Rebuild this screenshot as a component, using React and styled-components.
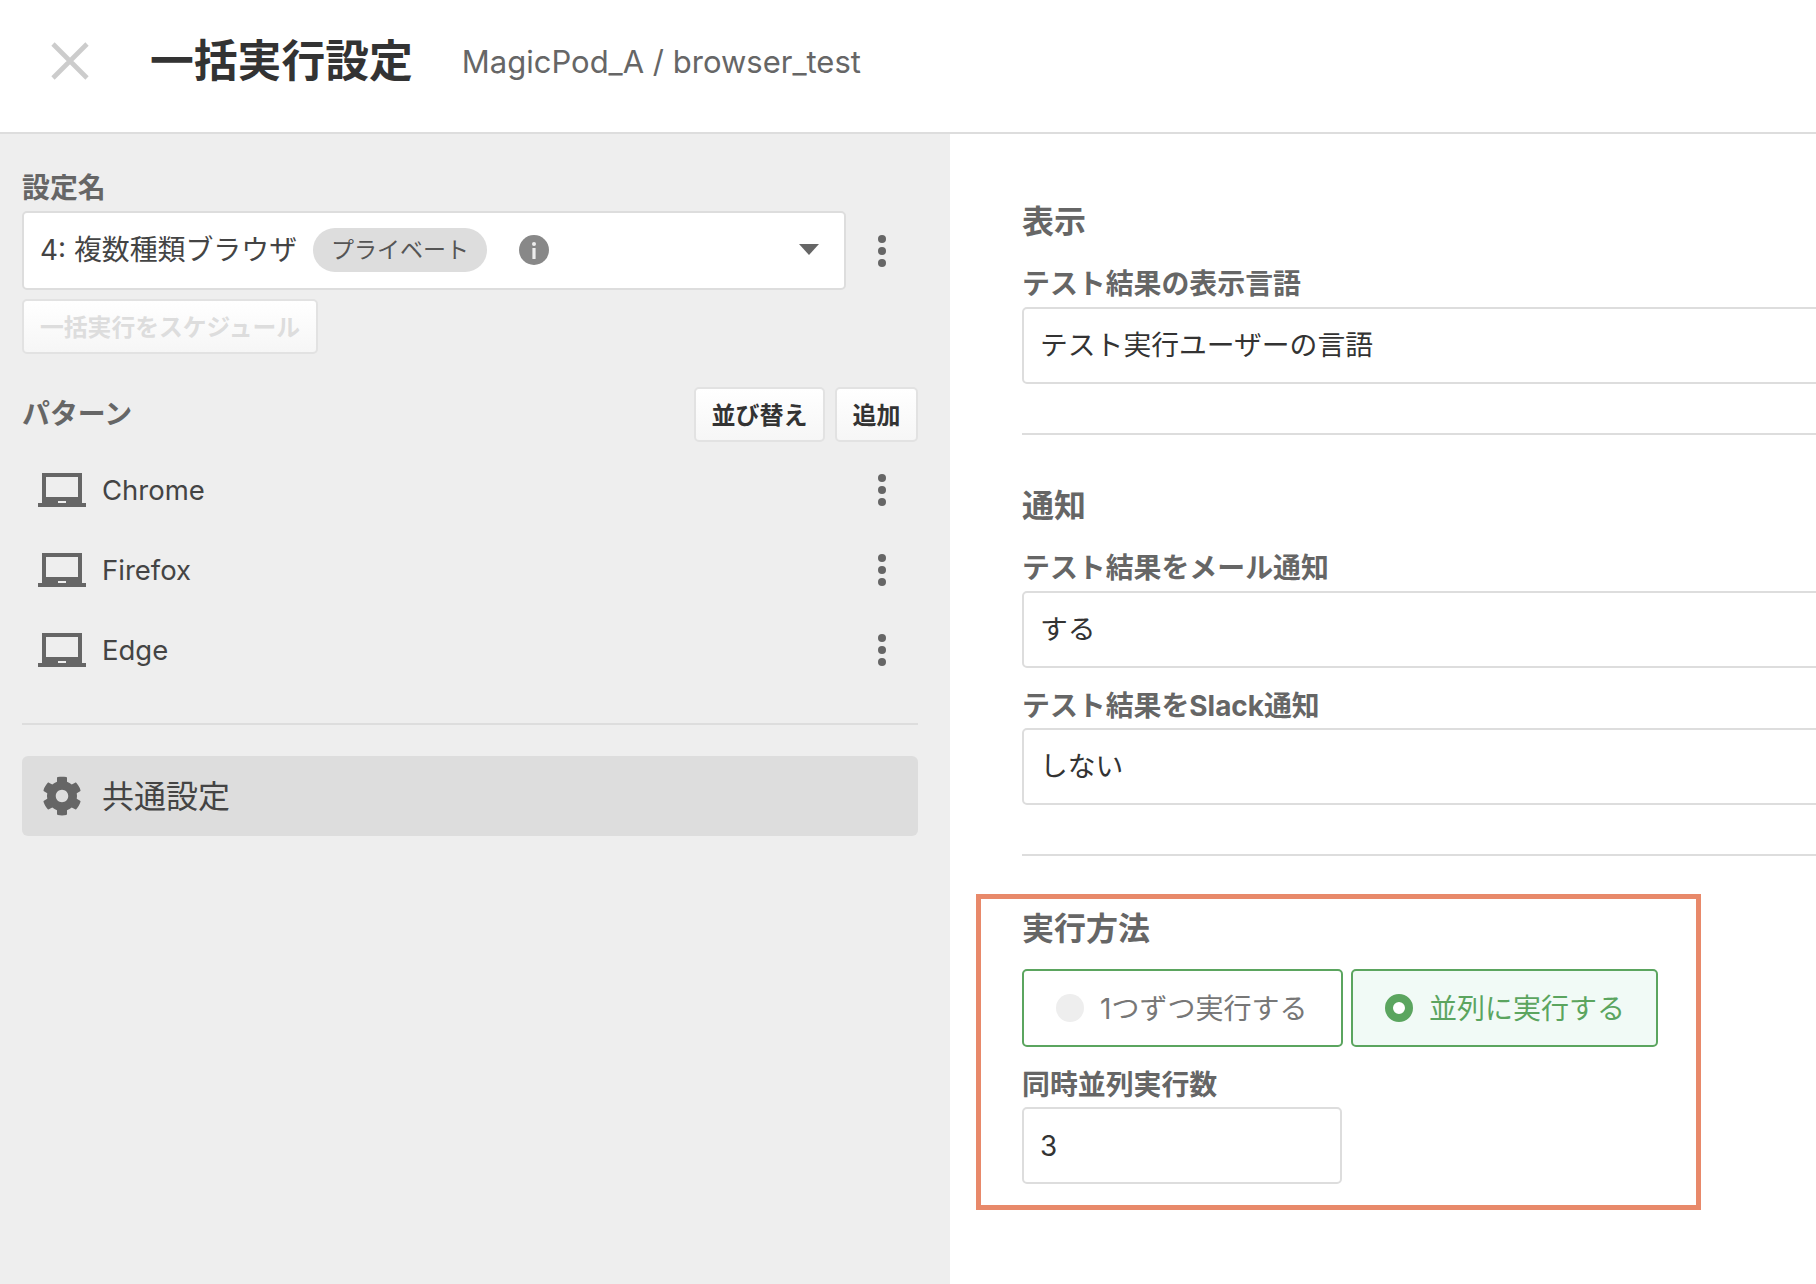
import React from 'react';
import styled, { createGlobalStyle } from 'styled-components';
import { FaCog } from 'react-icons/fa';

const GlobalStyle = createGlobalStyle`
  * {
    box-sizing: border-box;
  }

  html,
  body {
    margin: 0;
    height: 100%;
    overflow: hidden;
    background: #fff;
    font-family: Inter, "Noto Sans CJK JP", sans-serif;
    color: #444;
  }
`;

function LaptopIcon() {
  return (
    <svg width="48" height="34" viewBox="0 0 48 34">
      <path fill="#666" fillRule="evenodd" d="M4 0h40v30h4v4H0v-4h4zM8 4v20h32V4z" />
      <rect x="20" y="28" width="8" height="2" fill="#eee" />
    </svg>
  );
}

function InfoIcon() {
  return (
    <svg width="30" height="30" viewBox="0 0 30 30">
      <circle cx="15" cy="15" r="15" fill="#888" />
      <circle cx="15" cy="9" r="2" fill="#eee" />
      <rect x="13.4" y="13" width="3.2" height="11" rx="0.5" fill="#eee" />
    </svg>
  );
}

function CloseIcon() {
  return (
    <svg width="38" height="38" viewBox="0 0 38 38">
      <path d="M2 2l34 34M36 2L2 36" stroke="#ccc" strokeWidth="4.6" fill="none" />
    </svg>
  );
}

const patterns = ['Chrome', 'Firefox', 'Edge'];

function App() {
  return (
    <>
      <GlobalStyle />
      <Page>
        <Header>
          <CloseButton>
            <CloseIcon />
          </CloseButton>
          <Title>一括実行設定</Title>
          <Breadcrumb>MagicPod_A / browser_test</Breadcrumb>
        </Header>
        <Body>
          <Sidebar>
            <SidebarLabel>設定名</SidebarLabel>
            <SelectRow>
              <SelectBox>
                <SelectName>4: 複数種類ブラウザ</SelectName>
                <Chip>プライベート</Chip>
                <InfoWrap>
                  <InfoIcon />
                </InfoWrap>
                <Caret />
              </SelectBox>
              <Kebab>
                <i />
                <i />
                <i />
              </Kebab>
            </SelectRow>
            <ScheduleButton>一括実行をスケジュール</ScheduleButton>
            <PatternHead>
              <PatternTitle>パターン</PatternTitle>
              <SmallButton>並び替え</SmallButton>
              <SmallButton>追加</SmallButton>
            </PatternHead>
            <PatternList>
              {patterns.map((name) => (
                <PatternRow key={name}>
                  <LaptopIcon />
                  <PatternName>{name}</PatternName>
                  <Kebab>
                    <i />
                    <i />
                    <i />
                  </Kebab>
                </PatternRow>
              ))}
            </PatternList>
            <SideDivider />
            <CommonItem>
              <FaCog />
              <span>共通設定</span>
            </CommonItem>
          </Sidebar>
          <Content>
            <SectionTitle>表示</SectionTitle>
            <FieldLabel>テスト結果の表示言語</FieldLabel>
            <Field>テスト実行ユーザーの言語</Field>
            <Divider />
            <SectionTitle>通知</SectionTitle>
            <FieldLabel>テスト結果をメール通知</FieldLabel>
            <Field>する</Field>
            <FieldLabel $tight>テスト結果をSlack通知</FieldLabel>
            <Field>しない</Field>
            <Divider />
            <Highlight>
              <SectionTitle>実行方法</SectionTitle>
              <RadioGroup>
                <RadioCard>
                  <RadioDot />
                  <span>1つずつ実行する</span>
                </RadioCard>
                <RadioCard $active>
                  <RadioDot $active />
                  <span>並列に実行する</span>
                </RadioCard>
              </RadioGroup>
              <FieldLabel $tight>同時並列実行数</FieldLabel>
              <Field $short>3</Field>
            </Highlight>
          </Content>
        </Body>
      </Page>
    </>
  );
}

const Page = styled.div`
  display: flex;
  flex-direction: column;
  width: 1816px;
  height: 1284px;
  overflow: hidden;
`;

const Header = styled.header`
  display: flex;
  align-items: center;
  flex: 0 0 134px;
  padding: 0 0 10px 51px;
  border-bottom: 2px solid #ddd;
`;

const CloseButton = styled.div`
  display: flex;
  width: 38px;
  height: 38px;
  margin-right: 61px;
`;

const Title = styled.h1`
  margin: 2px 49px 0 0;
  font-size: 43.8px;
  line-height: 60px;
  font-weight: 700;
  color: #333;
`;

const Breadcrumb = styled.span`
  margin-top: 2px;
  font-size: 31px;
  line-height: 40px;
  color: #666;
`;

const Body = styled.div`
  display: flex;
  flex: 1;
  min-height: 0;
`;

const Sidebar = styled.aside`
  flex: 0 0 950px;
  padding: 31px 32px 0 22px;
  background: #eee;
`;

const SidebarLabel = styled.div`
  font-size: 27.9px;
  line-height: 46px;
  font-weight: 700;
  color: #666;
`;

const SelectRow = styled.div`
  display: flex;
  align-items: center;
  justify-content: space-between;
  padding-right: 32px;
`;

const SelectBox = styled.div`
  display: flex;
  align-items: center;
  width: 824px;
  height: 79px;
  padding: 0 25px 2px 16px;
  background: #fff;
  border: 2px solid #ddd;
  border-radius: 5px;
`;

const SelectName = styled.span`
  font-size: 27.9px;
  line-height: 40px;
  color: #444;
  white-space: nowrap;
`;

const Chip = styled.span`
  margin-left: 16px;
  padding: 0 18px;
  height: 44px;
  border-radius: 22px;
  background: #ddd;
  font-size: 23px;
  line-height: 44px;
  color: #555;
  white-space: nowrap;
`;

const InfoWrap = styled.span`
  display: flex;
  margin-left: 32px;
`;

const Caret = styled.span`
  margin-left: auto;
  width: 0;
  height: 0;
  border-left: 10px solid transparent;
  border-right: 10px solid transparent;
  border-top: 11px solid #666;
`;

const Kebab = styled.span`
  display: flex;
  flex-direction: column;
  gap: 4px;
  width: 8px;

  i {
    display: block;
    width: 8px;
    height: 8px;
    border-radius: 50%;
    background: #666;
  }
`;

const ScheduleButton = styled.div`
  display: inline-flex;
  align-items: center;
  height: 55px;
  margin-top: 9px;
  padding: 0 16px 3px;
  background: linear-gradient(#fff, #f6f6f6);
  border: 2px solid #e2e2e2;
  border-radius: 5px;
  font-size: 23.8px;
  font-weight: 700;
  color: #ddd;
`;

const PatternHead = styled.div`
  display: flex;
  align-items: center;
  gap: 10px;
  margin-top: 33px;
`;

const PatternTitle = styled.div`
  margin-right: auto;
  font-size: 27.9px;
  line-height: 39px;
  font-weight: 700;
  color: #666;
`;

const SmallButton = styled.div`
  display: flex;
  align-items: center;
  height: 55px;
  padding: 0 15.5px 3px;
  background: linear-gradient(#fff, #f6f6f6);
  border: 2px solid #e2e2e2;
  border-radius: 5px;
  font-size: 24px;
  font-weight: 700;
  color: #333;
`;

const PatternList = styled.div`
  display: flex;
  flex-direction: column;
  padding-top: 8px;
`;

const PatternRow = styled.div`
  display: flex;
  align-items: center;
  height: 80px;
  padding: 0 32px 0 16px;
`;

const PatternName = styled.span`
  flex: 1;
  margin-left: 16px;
  font-size: 27.5px;
  line-height: 40px;
  color: #444;
`;

const SideDivider = styled.div`
  height: 2px;
  margin-top: 33px;
  background: #ddd;
`;

const CommonItem = styled.div`
  display: flex;
  align-items: center;
  gap: 20px;
  height: 80px;
  margin-top: 31px;
  padding-left: 20px;
  background: #ddd;
  border-radius: 6px;
  font-size: 32px;
  color: #444;

  span {
    padding-bottom: 4px;
  }

  svg {
    width: 40px;
    height: 40px;
    color: #666;
  }
`;

const Content = styled.main`
  flex: 1;
  min-width: 0;
  padding: 65px 0 0 72px;
  overflow: hidden;
`;

const SectionTitle = styled.h2`
  margin: 0;
  font-size: 32px;
  line-height: 46px;
  font-weight: 700;
  color: #666;
`;

const FieldLabel = styled.div`
  margin: ${(p) => (p.$tight ? '19px 0 2px' : '20px 0 3px')};
  font-size: 27.9px;
  line-height: 39px;
  font-weight: 700;
  color: #666;
`;

const Field = styled.div`
  display: flex;
  align-items: center;
  width: ${(p) => (p.$short ? '320px' : 'calc(100% + 10px)')};
  height: 77px;
  padding: 0 16px ${(p) => (p.$short ? '0' : '6px')};
  background: #fff;
  border: 2px solid #ddd;
  border-radius: 5px;
  font-size: 27.8px;
  color: #333;
`;

const Divider = styled.div`
  height: 2px;
  margin: 49px 0 48px;
  background: #ddd;
`;

const Highlight = styled.section`
  width: 725px;
  height: 316px;
  margin: -10px 0 0 -46px;
  padding: 7px 0 0 41px;
  border: 5px solid #e8896a;
`;

const RadioGroup = styled.div`
  display: flex;
  gap: 8px;
  margin-top: 17px;
`;

const RadioCard = styled.div`
  display: flex;
  align-items: center;
  gap: 16px;
  width: ${(p) => (p.$active ? '307px' : '321px')};
  height: 78px;
  padding: 0 0 0 32px;
  background: ${(p) => (p.$active ? '#f1faf6' : '#fff')};
  border: 2px solid #5ba55f;
  border-radius: 5px;
  font-size: 28px;
  color: ${(p) => (p.$active ? '#5ba55f' : '#777')};

  span:last-child {
    padding-bottom: 3px;
  }
`;

const RadioDot = styled.span`
  flex: 0 0 28px;
  height: 28px;
  border-radius: 50%;
  background: ${(p) => (p.$active ? '#fff' : '#eee')};
  border: ${(p) => (p.$active ? '8px solid #5ba55f' : 'none')};
`;

export default App;
